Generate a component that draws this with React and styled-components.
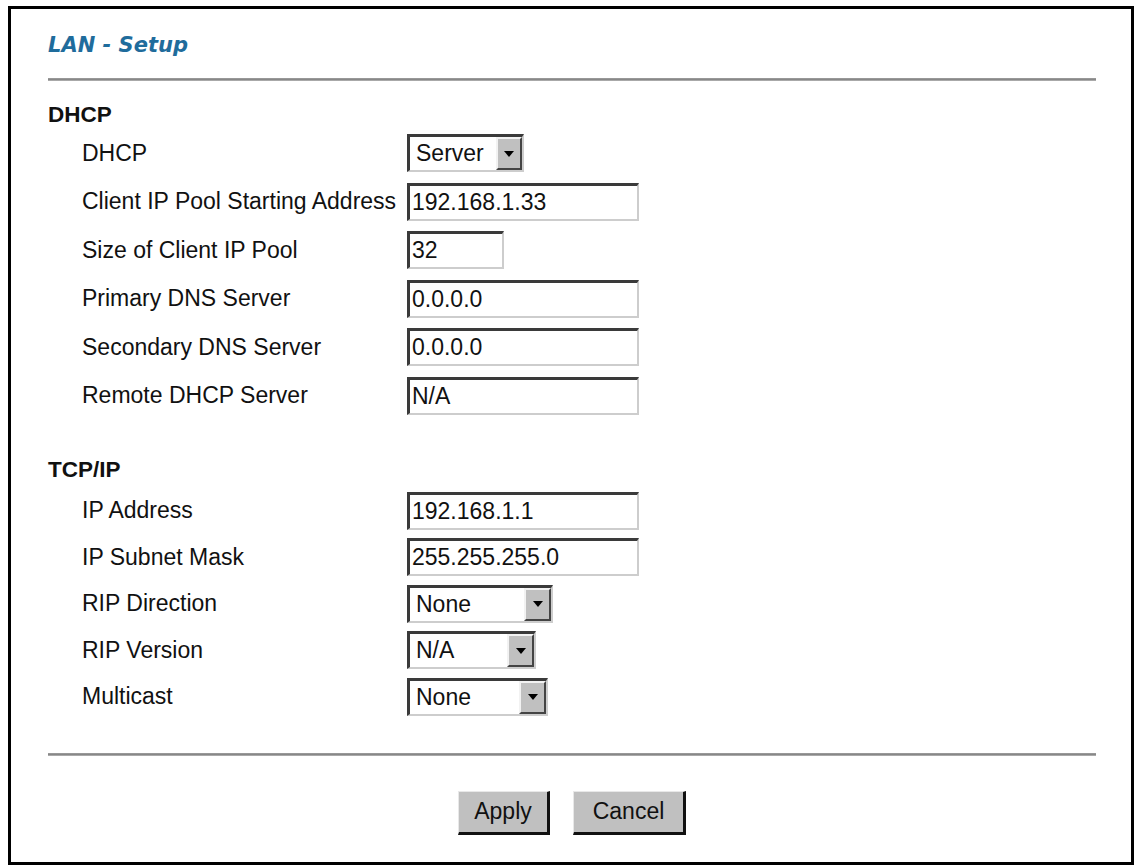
import React from 'react';
import styled, { createGlobalStyle } from 'styled-components';

const Global = createGlobalStyle`
  html, body { margin: 0; padding: 0; background: #fff; }
  body { font-family: "Liberation Sans", Arial, sans-serif; }
`;

const Frame = styled.div`
  box-sizing: border-box;
  width: 1126px;
  height: 859px;
  margin: 6px 0 0 8px;
  border: 3px solid #000;
  padding: 24px 35px 0 37px;
  display: flex;
  flex-direction: column;
  background: #fff;
`;

const Title = styled.h1`
  margin: 0;
  font-family: "DejaVu Sans", Verdana, sans-serif;
  font-weight: bold;
  font-style: italic;
  font-size: 21px;
  line-height: 25px;
  color: #1f6c9c;
`;

const Rule = styled.div`
  height: 3px;
  margin-top: ${(p) => p.$top}px;
  background: linear-gradient(#a0a0a0, #808080 66%, #d0d0d0);
`;

const SectionHead = styled.h2`
  margin: ${(p) => p.$top}px 0 0 0;
  font-family: "Liberation Sans", Arial, sans-serif;
  font-weight: bold;
  font-size: 22.5px;
  line-height: 26px;
  color: #111;
`;

const Rows = styled.div`
  display: flex;
  flex-direction: column;
  gap: ${(p) => p.$gap}px;
  margin-top: ${(p) => p.$top}px;
`;

const Row = styled.div`
  display: flex;
  align-items: center;
  height: 38px;
`;

const Label = styled.div`
  box-sizing: border-box;
  flex: 0 0 359px;
  padding-left: 34px;
  font-size: 23px;
  color: #111;
  white-space: nowrap;
`;

const insetBorder = `
  box-sizing: border-box;
  height: 38px;
  border-style: solid;
  border-width: 3px 2px 2px 3px;
  border-color: #3a3a3a #cdcdcd #cdcdcd #3a3a3a;
  background: #fff;
`;

const TextField = styled.input`
  ${insetBorder}
  width: ${(p) => p.$w}px;
  margin: 0;
  padding: 0 0 0 2px;
  font-family: "Liberation Sans", Arial, sans-serif;
  font-size: 23px;
  color: #111;
  outline: none;
`;

const SelectBox = styled.div`
  ${insetBorder}
  width: ${(p) => p.$w}px;
  display: flex;
  align-items: stretch;
`;

const SelectText = styled.span`
  flex: 1;
  display: flex;
  align-items: center;
  padding-left: 6px;
  font-size: 23px;
  color: #111;
`;

const ArrowButton = styled.span`
  box-sizing: border-box;
  width: ${(p) => p.$aw}px;
  background: #c0c0c0;
  border-style: solid;
  border-width: 2px 2px 2px 2px;
  border-color: #f2f2f2 #444 #444 #f2f2f2;
  display: flex;
  align-items: center;
  justify-content: center;
`;

const Triangle = styled.span`
  width: 0;
  height: 0;
  border-left: 5px solid transparent;
  border-right: 5px solid transparent;
  border-top: 6px solid #000;
`;

const Actions = styled.div`
  display: flex;
  justify-content: center;
  gap: 23px;
  margin-top: 35px;
`;

const Button = styled.button`
  box-sizing: border-box;
  width: ${(p) => p.$w}px;
  height: 44px;
  margin: 0;
  padding: 0;
  background: #c0c0c0;
  border-style: solid;
  border-width: 1px 3px 3px 1px;
  border-color: #e8e8e8 #111 #111 #e8e8e8;
  font-family: "Liberation Sans", Arial, sans-serif;
  font-size: 23px;
  color: #111;
`;

function Select({ value, w, aw = 27 }) {
  return (
    <SelectBox $w={w}>
      <SelectText>{value}</SelectText>
      <ArrowButton $aw={aw}>
        <Triangle />
      </ArrowButton>
    </SelectBox>
  );
}

const dhcpRows = [
  { label: 'DHCP', select: 'Server', w: 117, aw: 26 },
  { label: 'Client IP Pool Starting Address', value: '192.168.1.33', w: 232 },
  { label: 'Size of Client IP Pool', value: '32', w: 97 },
  { label: 'Primary DNS Server', value: '0.0.0.0', w: 232 },
  { label: 'Secondary DNS Server', value: '0.0.0.0', w: 232 },
  { label: 'Remote DHCP Server', value: 'N/A', w: 232 },
];

const tcpRows = [
  { label: 'IP Address', value: '192.168.1.1', w: 232 },
  { label: 'IP Subnet Mask', value: '255.255.255.0', w: 232 },
  { label: 'RIP Direction', select: 'None', w: 146 },
  { label: 'RIP Version', select: 'N/A', w: 129 },
  { label: 'Multicast', select: 'None', w: 141 },
];

function FieldRow({ r }) {
  return (
    <Row>
      <Label>{r.label}</Label>
      {r.select ? (
        <Select value={r.select} w={r.w} aw={r.aw} />
      ) : (
        <TextField $w={r.w} value={r.value} readOnly />
      )}
    </Row>
  );
}

export default function App() {
  return (
    <>
      <Global />
      <Frame>
        <Title>LAN - Setup</Title>
        <Rule $top={20} />
        <SectionHead $top={21}>DHCP</SectionHead>
        <Rows $gap={10.6} $top={6}>
          {dhcpRows.map((r) => (
            <FieldRow key={r.label} r={r} />
          ))}
        </Rows>
        <SectionHead $top={42}>TCP/IP</SectionHead>
        <Rows $gap={8.5} $top={9}>
          {tcpRows.map((r) => (
            <FieldRow key={r.label} r={r} />
          ))}
        </Rows>
        <Rule $top={37} />
        <Actions>
          <Button $w={92}>Apply</Button>
          <Button $w={113}>Cancel</Button>
        </Actions>
      </Frame>
    </>
  );
}
